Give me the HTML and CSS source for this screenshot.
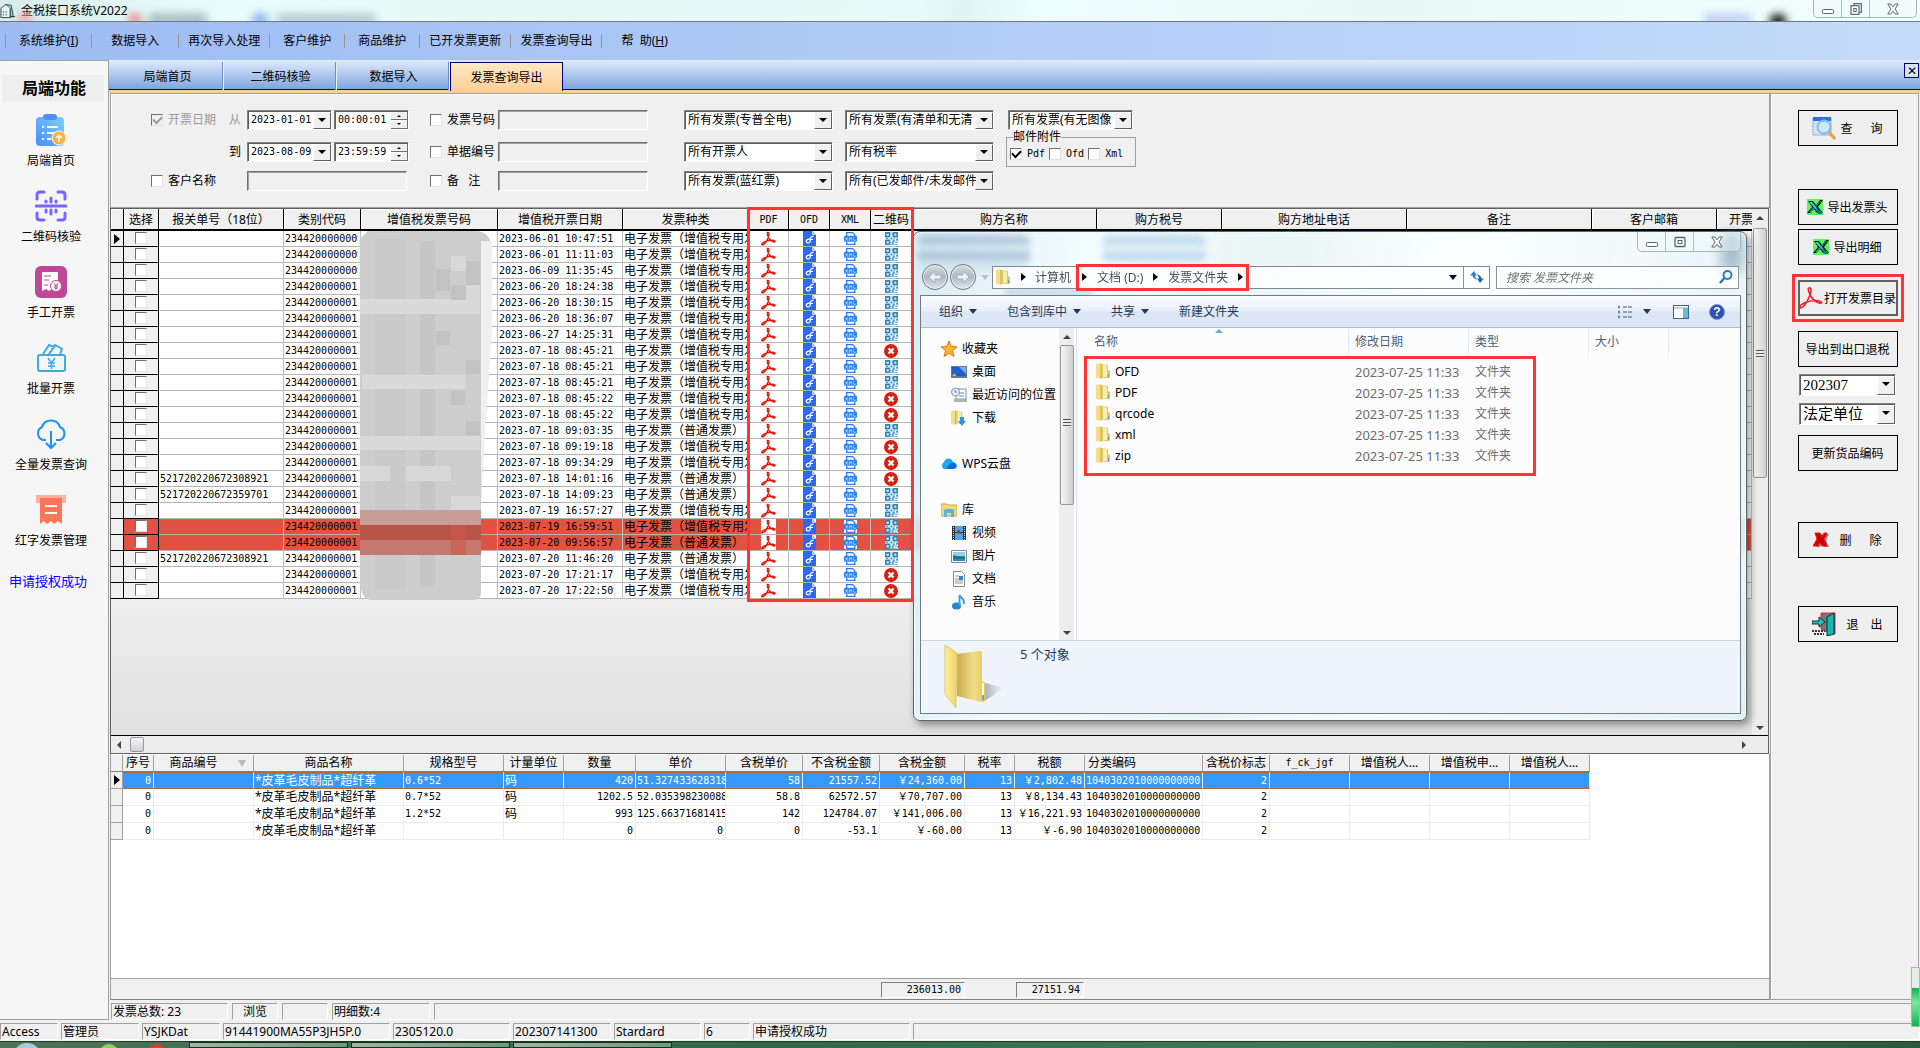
FILE: index.html
```html
<!DOCTYPE html>
<html lang="zh-CN">
<head>
<meta charset="utf-8">
<meta name="viewport" content="width=device-width, initial-scale=1">
<title>金税接口系统V2022</title>
<link rel="stylesheet" href="styles.css">
</head>
<body>
<svg class="defs" aria-hidden="true">
  <symbol id="i-pdf" viewBox="0 0 16 15"><path d="M7 1c2.200-.6 1.400 3 1 4.400-.9 3-3.500 8-6.200 8.800-2.100.3-.6-2.200 2.400-3.400C7 9.700 11 9 13.600 9.500c2.200.7 1.500 2.200-.3 1.600C10.500 10.200 7.500 6.500 7 4 6.700 2.800 6.300 1.400 7 1z" fill="none" stroke="#d91e0d" stroke-width="1.500"/></symbol>
  <symbol id="i-ofd" viewBox="0 0 13 15"><path d="M0 0h9l4 4v11H0z" fill="#2a69f5"/><path d="M9 0l4 4H9z" fill="#b9cffb"/><path d="M10.500 5.500C8 5 7.500 6 7.300 8v2.200c-.2 2.300-4 2.300-4.100.2 0-2 2.700-2.600 4.500-2.100h2.200" fill="none" stroke="#fff" stroke-width="1.200"/></symbol>
  <symbol id="i-xml" viewBox="0 0 12 12"><path d="M2.500 4V.6H8l2 2V4M2.500 9v2.400H10V9" fill="#fff" stroke="#2b7ff0" stroke-width="1.200"/><rect y="3.500" width="12" height="5.600" rx="1.200" fill="#2b7ff0"/><path d="M1.500 5l2 3m0-3l-2 3M5 8V5l1 1.500L7 5v3M9 5v2.700h1.800" fill="none" stroke="#cfe2ff" stroke-width=".7"/></symbol>
  <symbol id="i-qr" viewBox="0 0 12 12"><path d="M0 0h5v5H0zM7 0h5v5H7zM0 7h5v5H0z" fill="#2f86bd"/><path d="M1.500 1.500h2v2h-2zM8.500 1.500h2v2h-2zM1.500 8.500h2v2h-2z" fill="#d4ecf8"/><path d="M6 1h1v2H6zM5 5h2v2H5zM7 7h2v2H7zM9 9h3v1H9zM10 6h2v2h-2zM6 9h2v3H6zM9 11h2v1H9zM1 5.500h2v1H1zM8 5.500h1v1H8z" fill="#4a9fd0"/></symbol>
  <symbol id="i-bad" viewBox="0 0 14 14"><circle cx="7" cy="7" r="7" fill="#d8200f"/><path d="M4.500 4.500l5 5m0-5l-5 5" stroke="#fff" stroke-width="2.400"/></symbol>
  <symbol id="i-folder" viewBox="0 0 14 16"><path d="M5 1l7 1v5l2 1v7H6z" fill="#e3c75a"/><path d="M0 1l5-1 1 2v14l-6-1z" fill="#f2df8b"/><path d="M7 2l4 .5v11L7 15z" fill="#f8edb5"/><path d="M5 1v14" stroke="#c5a53a"/><path d="M12.500 11v3" stroke="#5a9ed8"/></symbol>
  <symbol id="i-excel" viewBox="0 0 16 16"><path d="M0 0h16v16H0z" fill="#5df35d"/><path d="M1 2h5l3 4 4-5h3l-5 7 5 6h-6l-3-4-4 4H0l5-6z" fill="#111"/><path d="M2 3h3l8 10h-2z" fill="#2ad8d8"/><path d="M13 2h1L4 13H2z" fill="#1aa6a6"/><path d="M9 9l6 4v2h-4z" fill="#087f80"/></symbol>
  <symbol id="i-min" viewBox="0 0 12 12"><rect x=".5" y="6.500" width="11" height="4" rx="1" fill="#fff" stroke="#5b6270"/></symbol>
  <symbol id="i-max" viewBox="0 0 12 12"><rect x="1" y="1.500" width="10" height="9" rx="1" fill="#fff" stroke="#5b6270" stroke-width="1.300"/><rect x="4" y="4.500" width="4" height="3" fill="none" stroke="#5b6270"/></symbol>
  <symbol id="i-restore" viewBox="0 0 12 12"><path d="M4 2.500V.7h7.300v8.600H9.500" fill="none" stroke="#5b6270" stroke-width="1.200"/><rect x="1" y="2.700" width="8" height="8.600" fill="#fff" stroke="#5b6270" stroke-width="1.200"/><rect x="3.800" y="5.500" width="2.400" height="3" fill="none" stroke="#5b6270"/></symbol>
  <symbol id="i-close" viewBox="0 0 12 12"><path d="M.8 1h3L6 3.800 8.200 1h3L8 6l3.200 5h-3L6 8.200 3.800 11h-3L4 6z" fill="#fff" stroke="#5b6270"/></symbol>
</svg>

<header class="titlebar">
  <svg class="app-icon" viewBox="0 0 16 16"><path d="M1 5l5-4 5 4v10H1z" fill="#e9f3f1" stroke="#24423f"/><path d="M6 1l6 1 2 11-3 2V5" fill="#8ed0c6" stroke="#24423f"/><path d="M3 9h1M6 9h1M3 12h1M6 12h1" stroke="#356" stroke-width="1.500"/><path d="M12 14h4" stroke="#111"/></svg>
  <h1>金税接口系统V2022</h1>
  <i class="glow pink"></i><i class="glow rose"></i><i class="glow slate"></i><i class="glow blue"></i><i class="glow steel"></i><i class="glow sky"></i><i class="glow dark"></i>
  <div class="win-buttons">
    <button aria-label="最小化"><svg><use href="#i-min"/></svg></button><button aria-label="还原"><svg><use href="#i-restore"/></svg></button><button class="close" aria-label="关闭"><svg><use href="#i-close"/></svg></button>
  </div>
</header>

<nav class="menubar">
  <a class="mid" href="#">系统维护(<u>I</u>)</a><a class="wide" href="#">数据导入</a><a href="#">再次导入处理</a><a class="mid" href="#">客户维护</a><a class="mid" href="#">商品维护</a><a href="#">已开发票更新</a><a href="#">发票查询导出</a><a class="wide" href="#">帮&nbsp;&nbsp;助(<u>H</u>)</a>
</nav>

<div class="body">
  <aside class="sidebar">
    <h2>局端功能</h2>
    <a href="#"><svg viewBox="0 0 32 32"><defs><linearGradient id="cb" x1="0" y1="1" x2="1" y2="0"><stop stop-color="#4a8cff"/><stop offset="1" stop-color="#7fd0ff"/></linearGradient></defs><rect x="1" y="3" width="28" height="29" rx="4" fill="url(#cb)"/><rect x="8" y="0" width="14" height="6" rx="3" fill="#4a90f8"/><path d="M7 13h2m3 0h11M7 19h2m3 0h7M7 25h2m3 0h4" stroke="#fff" stroke-width="2"/><circle cx="24" cy="24" r="7" fill="#fbb13c" stroke="#fff"/><path d="M24 28v-7m-3 3l3-3 3 3" stroke="#fff" stroke-width="1.500" fill="none"/></svg>局端首页</a>
    <a href="#"><svg viewBox="0 0 32 32" fill="none" stroke="#7a63ff" stroke-width="3" stroke-linecap="round"><path d="M2 9V5q0-3 3-3h4M23 2h4q3 0 3 3v4M2 23v4q0 3 3 3h4M23 30h4q3 0 3-3v-4M1 16h30M11 11v1M16 8v4M21 11v1M11 20v2M16 20v4M21 20v2"/></svg>二维码核验</a>
    <a href="#"><svg viewBox="0 0 32 32"><rect width="32" height="32" rx="6" fill="#bd4898"/><path d="M7 6h16v10l-3 9-3-2-3 2-3-2-4 2z" fill="#fff"/><path d="M9 10h7M9 14h5M9 19h4" stroke="#bd4898"/><circle cx="21" cy="20" r="5.500" fill="#fff" stroke="#bd4898"/><path d="M19 17l2 3 2-3M21 20v4M19 20h4M19 22h4" stroke="#bd4898" fill="none"/></svg>手工开票</a>
    <a href="#"><svg viewBox="0 0 32 32" fill="none" stroke="#3fa9e0" stroke-width="2"><rect x="3" y="13" width="27" height="16" rx="2"/><path d="M8 12l6-9 5 2-5 7M17 7l3-4 7 4-2 5"/><path d="M13 16l3.500 5 3.500-5M16.500 21v6M13 21h7M13 24h7" stroke-width="1.500"/></svg>批量开票</a>
    <a href="#"><svg viewBox="0 0 32 32" fill="none" stroke="#1a93f5" stroke-width="2"><path d="M11 22H8A7 7 0 0 1 7 9 9.500 9.500 0 0 1 25 9a7 7 0 0 1 0 13h-4M16 13v17m-5-5l5 5 5-5"/></svg>全量发票查询</a>
    <a href="#"><svg viewBox="0 0 32 32"><path d="M1 1h30v8H1z" fill="#ffb1a0"/><path d="M5 4h22v26l-4-3-4 3-3-3-4 3-3-3-4 3z" fill="#ff7558"/><path d="M10 12h12M10 19h12" stroke="#fff" stroke-width="2"/></svg>红字发票管理</a>
    <p>申请授权成功</p>
  </aside>

  <main class="main">
    <nav class="tabs">
      <a href="#">局端首页</a><a href="#">二维码核验</a><a href="#">数据导入</a><a class="active" href="#">发票查询导出</a>
      <button aria-label="关闭标签">✕</button>
    </nav>
    <div class="work">
      <div class="content">
        <form class="filter">
          <label class="tick off"><input type="checkbox" checked disabled>开票日期</label>
          <span class="off">从</span>
          <div class="when"><span class="combo num"><select aria-label="开始日期"><option>2023-01-01</option></select></span><span class="spin"><input aria-label="开始时间" value="00:00:01"><i></i></span></div>
          <label class="tick c4"><input type="checkbox">发票号码</label>
          <input class="field" aria-label="发票号码">
          <span class="combo c6"><select aria-label="发票类型"><option>所有发票(专普全电)</option></select></span>
          <span class="combo c7"><select aria-label="清单"><option>所有发票(有清单和无清</option></select></span>
          <div class="attach">
            <span class="combo"><select aria-label="图像"><option>所有发票(有无图像</option></select></span>
            <fieldset><legend>邮件附件</legend>
              <label class="tick num"><input type="checkbox" checked>Pdf</label><label class="tick num"><input type="checkbox">Ofd</label><label class="tick num"><input type="checkbox">Xml</label>
            </fieldset>
          </div>
          <span class="c2">到</span>
          <div class="when"><span class="combo num"><select aria-label="结束日期"><option>2023-08-09</option></select></span><span class="spin"><input aria-label="结束时间" value="23:59:59"><i></i></span></div>
          <label class="tick c4"><input type="checkbox">单据编号</label>
          <input class="field" aria-label="单据编号">
          <span class="combo c6"><select aria-label="开票人"><option>所有开票人</option></select></span>
          <span class="combo c7"><select aria-label="税率"><option>所有税率</option></select></span>
          <label class="tick c1"><input type="checkbox">客户名称</label>
          <input class="field c3" aria-label="客户名称">
          <label class="tick c4"><input type="checkbox">备&nbsp;&nbsp;&nbsp;注</label>
          <input class="field" aria-label="备注">
          <span class="combo c6"><select aria-label="蓝红票"><option>所有发票(蓝红票)</option></select></span>
          <span class="combo c7"><select aria-label="邮件状态"><option>所有(已发邮件/未发邮件)</option></select></span>
        </form>

        <section class="invoices">
          <div class="view">
            <div class="clip">
            <table class="grid1">
              <colgroup><col class="w13"><col class="w35"><col class="w125"><col class="w77"><col class="w137"><col class="w125"><col class="w126"><col class="w40"><col class="w41"><col class="w41"><col class="w41"><col class="w185"><col class="w125"><col class="w185"><col class="w185"><col class="w125"><col></colgroup>
              <thead><tr><th></th><th>选择</th><th>报关单号（18位）</th><th>类别代码</th><th>增值税发票号码</th><th>增值税开票日期</th><th>发票种类</th><th class="num">PDF</th><th class="num">OFD</th><th class="num">XML</th><th>二维码</th><th>购方名称</th><th>购方税号</th><th>购方地址电话</th><th>备注</th><th>客户邮箱</th><th class="last">开票</th></tr></thead>
              <tbody id="invoice-rows"></tbody>
            </table>
            </div>
            <div class="vscroll"><i class="up"></i><b></b><i class="down"></i></div>
          </div>
          <div class="hscroll"><i class="left"></i><b></b><i class="right"></i></div>

          <svg class="mosaic" viewBox="0 0 134 369" aria-hidden="true">
            <path d="M8 0h110q12 2 13 14v90l-7 110-3 55v92q0 8-8 8H12q-8 0-10-8-4-8-2-20V8z" fill="#cdcdcd"/>
            <path d="M121 10h11v90l-7 100-4 60z" fill="#f0f0f0"/>
            <path d="M15 8h30v350H15z" fill="#c9c9c9"/><path d="M60 10h15v345H60z" fill="#c6c6c6"/>
            <path d="M0 68h120v15H0zM2 144h103v14H2zM0 205h120v14H0z" fill="#dadada"/>
            <path d="M76 38h14v22H76zM91 54h15v15H91zM106 30h14v24h-14zM76 100h14v14H76zM106 129h14v14h-14zM91 160h14v14H91zM106 190h14v14h-14z" fill="#c2c2c2"/>
            <path d="M91 25h15v15H91zM106 54h14v14h-14zM0 235h30v15H0zM46 235h45v15H46zM91 265h29v14H91z" fill="#d8d8d8"/>
            <path d="M0 279h121v15H0z" fill="#c99d98"/><path d="M0 294h121v15H0z" fill="#b9544a"/><path d="M0 309h121v15H0z" fill="#c57870"/><path d="M91 294h15v30H91z" fill="#d0584a" opacity=".6"/>
          </svg>

          <div class="explorer">
            <i class="smudge s1"></i><i class="smudge s2"></i><i class="smudge s3"></i><i class="smudge s4"></i>
            <div class="ex-title"><div class="win-buttons">
              <button aria-label="最小化"><svg><use href="#i-min"/></svg></button><button aria-label="最大化"><svg><use href="#i-max"/></svg></button><button class="close" aria-label="关闭"><svg><use href="#i-close"/></svg></button></div></div>
            <div class="ex-nav">
              <button class="round" aria-label="后退"><svg viewBox="0 0 16 16"><path d="M8 2L2 8l6 6v-4h6V6H8z" fill="#eef2f5" stroke="#a9b0b6"/></svg></button><button class="round" aria-label="前进"><svg viewBox="0 0 16 16"><path d="M8 2l6 6-6 6v-4H2V6h6z" fill="#eef2f5" stroke="#a9b0b6"/></svg></button>
              <i class="drop pale"></i>
              <div class="address">
                <svg class="fold"><use href="#i-folder"/></svg><i class="play"></i><a href="#">计算机</a>
                <div class="path"><i class="play"></i><a href="#">文档 (D:)</a><i class="play"></i><a href="#">发票文件夹</a><i class="play"></i></div>
                <i class="drop"></i>
                <button aria-label="刷新"><svg viewBox="0 0 16 14"><path d="M5 1L1 5.500h2.500Q4 9 8 9.500 6 7 6 5.500h2z" fill="#2f7fc4"/><path d="M11 13l4-4.500h-2.500Q12 5 8 4.500q2 2.500 2 4H8z" fill="#1f68ab"/></svg></button>
              </div>
              <div class="search"><input aria-label="搜索" placeholder="搜索 发票文件夹"><svg viewBox="0 0 14 14" fill="none" stroke="#2a7cc0"><circle cx="8.500" cy="5" r="4" stroke-width="2"/><path d="M5.500 8L1 13" stroke-width="2.500"/></svg></div>
            </div>
            <div class="ex-frame">
              <div class="ex-tools">
                <a href="#">组织<i class="drop"></i></a><a href="#">包含到库中<i class="drop"></i></a><a href="#">共享<i class="drop"></i></a><a href="#">新建文件夹</a>
                <div class="tool-icons">
                  <svg class="i16" viewBox="0 0 16 14"><path d="M1 2h2M1 7h2M1 12h2" stroke="#5a87b8" stroke-width="2.500"/><path d="M6 2h4m1 0h4M6 7h4m1 0h4M6 12h4m1 0h4" stroke="#4b5a6c"/></svg><i class="drop"></i>
                  <svg class="i16 pane" viewBox="0 0 16 14"><rect x=".5" y=".5" width="15" height="13" fill="#fff" stroke="#4a6078"/><path d="M1 3h14" stroke="#8aa"/><path d="M10 3h5v10h-5z" fill="#62bce0"/></svg>
                  <svg class="i16" viewBox="0 0 16 16"><circle cx="8" cy="8" r="7.500" fill="#2b50b8" stroke="#8a94a8"/><text x="8" y="12" font-size="12" font-weight="700" text-anchor="middle" fill="#fff" font-family="Liberation Sans, sans-serif">?</text></svg>
                </div>
              </div>
              <div class="ex-body">
                <ul class="tree">
                  <li class="root"><svg viewBox="0 0 16 16"><path d="M8 0l2.200 5.500 5.800.4-4.500 3.700L13 15.500 8 12.300 3 15.500l1.500-5.900L0 5.900l5.800-.4z" fill="#ffb52e" stroke="#d9771d"/></svg>收藏夹</li>
                  <li><svg viewBox="0 0 16 16"><rect y="2" width="16" height="12" fill="#5d7a94"/><path d="M1 3h14v9H1z" fill="#1f5fc8"/><path d="M8 3h7v7z" fill="#78aef0"/><path d="M1 12l3-3 1 3z" fill="#fa5"/></svg>桌面</li>
                  <li><svg viewBox="0 0 16 16"><path d="M5 2h10v10H5z" fill="#fff" stroke="#889"/><circle cx="4.500" cy="5" r="4" fill="#e5e9ee" stroke="#8a97a3"/><path d="M4 3v2h2M8 6h5M8 9h5" stroke="#4790c0" fill="none"/><path d="M3 12h13v3H3z" fill="#aab3ba"/></svg>最近访问的位置</li>
                  <li><svg viewBox="0 0 16 16"><use href="#i-folder" width="13" height="15"/><path d="M9 7h4v4h2l-4 5-4-5h2z" fill="#2e96e0"/></svg>下载</li>
                  <li></li>
                  <li class="root"><svg viewBox="0 0 16 16"><path d="M3 13a4 4 0 0 1 0-7c2-5 8-4 9 0 5 1 5 7 0 7z" fill="#1fa8ee"/><path d="M6 13c1-5 5-7 7-6 4 1 3 6-1 6z" fill="#1466dc"/></svg>WPS云盘</li>
                  <li></li>
                  <li class="root"><svg viewBox="0 0 16 16"><path d="M0 2h6l1 1h9v11H0z" fill="#f1da7a" stroke="#caa944"/><path d="M3 15V9q0-2 2-2h6q2 0 2 2v6h-3v-4H6v4z" fill="#56b4e4"/></svg>库</li>
                  <li><svg viewBox="0 0 16 16"><path d="M1 1h14v14H1z" fill="#333"/><path d="M4 1h8v6H4zM4 8h8v7H4z" fill="#4da6e8"/><path d="M7 4l4 5-5-1z" fill="#8c3b20"/><path d="M2.500 2v13M13.500 2v13" stroke="#ddd" stroke-dasharray="1 1"/></svg>视频</li>
                  <li><svg viewBox="0 0 16 16"><path d="M.5 2.500h15v12H.5z" fill="#fff" stroke="#888"/><path d="M2 4h12v5H2z" fill="#8fd0f5"/><path d="M2 7q5 2 12 1v5H2z" fill="#1f7c70"/><path d="M2 11h12v2H2z" fill="#2f8ad0"/></svg>图片</li>
                  <li><svg viewBox="0 0 16 16"><path d="M2.500.5h8l3 3v12h-11z" fill="#fff" stroke="#888"/><path d="M4 5h4M4 8h8M4 10h8M4 12h8" stroke="#89a"/><path d="M8 5h4v4H8z" fill="#3a7fb8"/></svg>文档</li>
                  <li><svg viewBox="0 0 16 16"><ellipse cx="5.500" cy="12" rx="4.500" ry="3.500" fill="#1f86d2"/><path d="M8.500 12V1c1 3 6 4 4 9" fill="none" stroke="#3aa0e0" stroke-width="2"/></svg>音乐</li>
                </ul>
                <div class="vscroll"><i class="up"></i><b></b><i class="down"></i></div>
                <div class="files-area">
                  <table class="files">
                    <colgroup><col class="f1"><col class="f2"><col class="f2"><col class="f4"><col></colgroup>
                    <thead><tr><th>名称</th><th>修改日期</th><th>类型</th><th>大小</th><th></th></tr></thead>
                    <tbody>
                      <tr><td><svg class="fold"><use href="#i-folder"/></svg>OFD</td><td class="date">2023-07-25 11:33</td><td>文件夹</td><td></td><td></td></tr>
                      <tr><td><svg class="fold"><use href="#i-folder"/></svg>PDF</td><td class="date">2023-07-25 11:33</td><td>文件夹</td><td></td><td></td></tr>
                      <tr><td><svg class="fold"><use href="#i-folder"/></svg>qrcode</td><td class="date">2023-07-25 11:33</td><td>文件夹</td><td></td><td></td></tr>
                      <tr><td><svg class="fold"><use href="#i-folder"/></svg>xml</td><td class="date">2023-07-25 11:33</td><td>文件夹</td><td></td><td></td></tr>
                      <tr><td><svg class="fold"><use href="#i-folder"/></svg>zip</td><td class="date">2023-07-25 11:33</td><td>文件夹</td><td></td><td></td></tr>
                    </tbody>
                  </table>
                  <i class="mark files-mark"></i>
                </div>
              </div>
              <div class="ex-info">
                <svg viewBox="0 0 60 66"><defs><linearGradient id="fa"><stop stop-color="#fdf09c"/><stop offset="1" stop-color="#eed467"/></linearGradient><linearGradient id="fb"><stop stop-color="#c9a94a"/><stop offset=".6" stop-color="#f0dc88"/><stop offset="1" stop-color="#e9c94c"/></linearGradient><linearGradient id="fc"><stop stop-color="#a2a8b2"/><stop offset="1" stop-color="#a2a8b2" stop-opacity="0"/></linearGradient></defs><path d="M38 38l21 6-9 7-11 7z" fill="url(#fc)"/><path d="M12 10L36 7q2 0 2 2v28l3 2v18l-4 1-24-6z" fill="url(#fb)"/><path d="M1 1l12 8v31l-1 2v22L1 50z" fill="url(#fa)" stroke="#dfc66e"/><path d="M38 39h2v13h-2z" fill="#fff"/><path d="M38 51h2v5h-2z" fill="#59a3e6"/></svg>
                <span>5 个对象</span>
              </div>
            </div>
          </div>
          <i class="mark columns-mark"></i>
        </section>

        <section class="details">
          <table class="grid2">
            <colgroup><col class="w12"><col class="w31"><col class="w100"><col class="w150"><col class="w100"><col class="w60"><col class="w72"><col class="w90"><col class="w77"><col class="w77"><col class="w85"><col class="w50"><col class="w70"><col class="w118"><col class="w67"><col class="w80"><col class="w80"><col class="w80"><col class="w80"></colgroup>
            <thead><tr><th></th><th>序号</th><th>商品编号<i class="sort"></i></th><th>商品名称</th><th>规格型号</th><th>计量单位</th><th>数量</th><th>单价</th><th>含税单价</th><th>不含税金额</th><th>含税金额</th><th>税率</th><th>税额</th><th class="start">分类编码</th><th>含税价标志</th><th class="num">f_ck_jgf</th><th>增值税人...</th><th>增值税申...</th><th>增值税人...</th></tr></thead>
            <tbody id="item-rows"></tbody>
          </table>
          <div class="totals"><output>236013.00</output><output class="second">27151.94</output></div>
        </section>
      </div>

      <aside class="actions">
        <button><svg class="b24" viewBox="0 0 24 24"><path d="M1 2h18v17H1z" fill="#cfe4fb" stroke="#8bb6ea"/><path d="M1 1h18v4H1z" fill="#2a6ff0"/><circle cx="12" cy="11" r="6.500" fill="#c2edfb" stroke="#8fb7d4" stroke-width="2"/><path d="M17 16l6 7" stroke="#e9a13a" stroke-width="3"/></svg>查<span class="wide-gap"></span>询</button>
        <button class="m43"><svg class="i16"><use href="#i-excel"/></svg>导出发票头</button>
        <button class="m4"><svg class="i16"><use href="#i-excel"/></svg>导出明细</button>
        <button class="m15 focus"><svg class="b24" viewBox="0 0 24 24" fill="none" stroke="#e8202a" stroke-width="1.600"><path d="M10 2c3-1 2 4 1 7-2 5-6 12-9 13-3 0-1-3 3-5 5-2 11-3 15-2 4 1 3 3 0 2-5-1-9-7-10-11-1-2-1-4 0-4z"/></svg>打开发票目录</button>
        <button class="m15">导出到出口退税</button>
        <span class="combo big m7"><select aria-label="月份"><option>202307</option></select></span>
        <span class="combo big m7"><select aria-label="单位"><option>法定单位</option></select></span>
        <button class="m10">更新货品编码</button>
        <button class="m51"><svg class="i16" viewBox="0 0 16 16"><path d="M4 2h5l2 3 2-3h3l-3 6 3 7h-5l-2-3-2 3H3l4-7z" fill="#888"/><path d="M2 1h5l2 4 2-4h3l-3 6 3 7H9L7 11l-2 3H0l4-7z" fill="#c00" stroke="#f11"/></svg><span class="pad"></span>删<span class="wide-gap"></span>除</button>
        <button class="m48"><svg class="b24" viewBox="0 0 24 24"><path d="M9 1h14v21h-3L9 17z" fill="#777" stroke="#e22"/><path d="M15 5l7-4v21l-7 2z" fill="#13b6b6" stroke="#033"/><path d="M0 9h7V5l6 5-6 5v-3H0z" fill="#1cc" stroke="#222"/><path d="M0 19h13M2 22h10" stroke="#333" stroke-width="2" stroke-dasharray="2 1"/></svg><span class="pad"></span>退<span class="gap"></span>出</button>
      </aside>
    </div>
    <footer class="status first"><span class="s117">发票总数: 23</span><span class="s46 center">浏览</span><span class="s46"></span><span class="s98">明细数:4</span><span class="rest"></span></footer>
    <i class="meter"></i>
  </main>
</div>

<footer class="status"><span class="s58">Access</span><span class="s78">管理员</span><span class="s78">YSJKDat</span><span class="s167">91441900MA55P3JH5P.0</span><span class="s117">2305120.0</span><span class="s98">202307141300</span><span class="s87">Stardard</span><span class="s46">6</span><span class="s158">申请授权成功</span><span class="rest"></span></footer>
<div class="taskbar"><i class="orb"></i><i class="dot green"></i><i class="dot red"></i><b></b><b></b><b></b></div>
<script src="script.js"></script>
</body>
</html>
```

FILE: script.js
```js
// Invoice list: declaration number, category code, date, kind (0 special, 1 ordinary), QR available, credit note
const invoices = [
  ['', '234420000000', '2023-06-01 10:47:51', 0, 1],
  ['', '234420000000', '2023-06-01 11:11:03', 0, 1],
  ['', '234420000000', '2023-06-09 11:35:45', 0, 1],
  ['', '234420000001', '2023-06-20 18:24:38', 0, 1],
  ['', '234420000001', '2023-06-20 18:30:15', 0, 1],
  ['', '234420000001', '2023-06-20 18:36:07', 0, 1],
  ['', '234420000001', '2023-06-27 14:25:31', 0, 1],
  ['', '234420000001', '2023-07-18 08:45:21', 0, 0],
  ['', '234420000001', '2023-07-18 08:45:21', 0, 1],
  ['', '234420000001', '2023-07-18 08:45:21', 0, 1],
  ['', '234420000001', '2023-07-18 08:45:22', 0, 0],
  ['', '234420000001', '2023-07-18 08:45:22', 0, 0],
  ['', '234420000001', '2023-07-18 09:03:35', 1, 1],
  ['', '234420000001', '2023-07-18 09:19:18', 0, 0],
  ['', '234420000001', '2023-07-18 09:34:29', 0, 0],
  ['521720220672308921', '234420000001', '2023-07-18 14:01:16', 1, 0],
  ['521720220672359701', '234420000001', '2023-07-18 14:09:23', 1, 1],
  ['', '234420000001', '2023-07-19 16:57:27', 0, 1],
  ['', '234420000001', '2023-07-19 16:59:51', 0, 1, 1],
  ['', '234420000001', '2023-07-20 09:56:57', 1, 1, 1],
  ['521720220672308921', '234420000001', '2023-07-20 11:46:20', 1, 1],
  ['', '234420000001', '2023-07-20 17:21:17', 0, 0],
  ['', '234420000001', '2023-07-20 17:22:50', 0, 0]
];
const kinds = ['电子发票（增值税专用发票）', '电子发票（普通发票）'];
const icon = (id) => `<td class="ic"><svg class="${id}"><use href="#i-${id}"/></svg></td>`;
document.getElementById('invoice-rows').innerHTML = invoices.map((r, i) =>
  `<tr class="${r[5] ? 'red' : ''}"><td class="head">${i ? '' : '<i class="cursor"></i>'}</td>` +
  `<td class="pick"><input type="checkbox" aria-label="选择第${i + 1}行"></td>` +
  `<td class="num">${r[0]}</td><td class="num">${r[1]}</td><td></td><td class="num">${r[2]}</td><td>${kinds[r[3]]}</td>` +
  icon('pdf') + icon('ofd') + icon('xml') + icon(r[4] ? 'qr' : 'bad') +
  '<td></td>'.repeat(6) + '</tr>').join('');

const items = [
  ['0.6*52', '码', '420', '51.3274336283186', '58', '21557.52', '￥24,360.00', '13', '￥2,802.48'],
  ['0.7*52', '码', '1202.5', '52.0353982300885', '58.8', '62572.57', '￥70,707.00', '13', '￥8,134.43'],
  ['1.2*52', '码', '993', '125.663716814159', '142', '124784.07', '￥141,006.00', '13', '￥16,221.93'],
  ['', '', '0', '0', '0', '-53.1', '￥-60.00', '13', '￥-6.90']
];
document.getElementById('item-rows').innerHTML = items.map((r, i) =>
  `<tr class="${i ? '' : 'current'}"><td class="head">${i ? '' : '<i class="cursor"></i>'}</td><td class="num end">0</td><td></td>` +
  `<td>*皮革毛皮制品*超纤革</td><td class="num">${r[0]}</td><td>${r[1]}</td><td class="num end">${r[2]}</td>` +
  `<td class="num ${r[3].length > 2 ? '' : 'end'}">${r[3]}</td>` +
  r.slice(4).map((v) => `<td class="num end">${v}</td>`).join('') +
  '<td class="num">1040302010000000000</td><td class="num end">2</td>' + '<td></td>'.repeat(4) + '</tr>').join('');
```

FILE: styles.css
```css
* { box-sizing: border-box; }
html, body { margin: 0; }
body {
  display: flex; flex-direction: column; min-height: 100vh; overflow: hidden;
  font: 12px/15px "Noto Sans", "Noto Sans CJK SC", sans-serif; color: #000; background: #f0f0f0;
}
a { color: inherit; text-decoration: none; }
button, input, select { font: inherit; color: inherit; margin: 0; padding: 0; border-radius: 0; }
h1, h2, p, ul { margin: 0; padding: 0; font: inherit; list-style: none; }
svg { display: block; flex: none; }
.defs { display: none; }
.num { font-family: "DejaVu Sans Mono", "Noto Sans CJK SC", monospace; font-size: 10px; }
.i16 { width: 16px; height: 16px; }
.b24 { width: 24px; height: 24px; }

/* title bar */
.titlebar { position: relative; display: flex; align-items: flex-start; gap: 6px; height: 22px; overflow: hidden; border-bottom: 1px solid #70787c; background: linear-gradient(100deg, #d9ecec 0, #e9fdfc 12%, #e4f8f6 30%, #eafafa 48%, #e2f2f2 50%, #effefe 54%, #eaf9f8 72%, #f2fffe 100%); }
.titlebar h1 { line-height: 21px; }
.app-icon { width: 15px; height: 16px; margin-top: 3px; }
.glow { position: absolute; top: 14px; width: 60px; height: 10px; border-radius: 5px; filter: blur(4px); }
.pink { left: 18px; width: 14px; background: #f2a0a0; }
.rose { left: 128px; width: 14px; background: #f08080; }
.slate { left: 148px; background: #9fb4c4; }
.blue { left: 252px; width: 16px; background: #7ba4f4; }
.steel { left: 276px; width: 100px; background: #b0c4d2; }
.sky { left: 1704px; width: 48px; background: #bccdf5; }
.dark { left: 1770px; width: 16px; height: 16px; background: #1e2418; }
.win-buttons { display: flex; margin-left: auto; border: 1px solid #a5b4b6; border-top: 0; border-radius: 0 0 5px 5px; overflow: hidden; }
.win-buttons button { display: grid; place-items: center; width: 28px; height: 17px; border: 0; border-right: 1px solid #b0bec0; background: #f0fbfb66; }
.win-buttons .close { width: 46px; border: 0; }
.win-buttons svg { width: 12px; height: 12px; }
.titlebar .win-buttons { margin-right: 3px; }

/* menu */
.menubar { display: flex; align-items: center; height: 38px; padding-left: 5px; background: linear-gradient(90deg, #9dbcf3, #c4dbf9); }
.menubar a { padding: 0 9px; border-left: 1px solid #9a9396; line-height: 14px; }
.menubar .mid { padding: 0 13px; }
.menubar .wide { padding: 0 19px; }

.body { display: flex; flex: 1; }
.sidebar { display: flex; flex-direction: column; width: 109px; margin-bottom: 1px; padding: 14px 8px 0 2px; border: 1px solid #a0a0a0; border-width: 1px 1px 1px 0; background: #f6f6f6; }
.sidebar h2 { height: 27px; margin: 0 -4px 12px 0; padding-left: 2px; background: #eee; font-size: 16px; font-weight: 700; line-height: 26px; text-align: center; }
.sidebar a { display: flex; flex-direction: column; align-items: center; gap: 7px; height: 76px; }
.sidebar svg { width: 32px; height: 32px; }
.sidebar p { margin-top: 4px; padding-left: 7px; font-size: 13px; color: #00f; }

.main { position: relative; display: flex; flex: 1; flex-direction: column; min-width: 0; }
.tabs { display: flex; height: 33px; padding: 2px 0 0 2px; border-bottom: 3px solid #ffcf95; background: linear-gradient(#dfebfd, #7ba3de); box-shadow: inset 0 -1px #000080; }
.tabs a { width: 113px; line-height: 29px; text-align: center; box-shadow: inset -1px 0 #eaf2ff, inset -2px 0 #6c8dc4; }
.tabs .active { margin-bottom: -1px; border: 1px solid #000080; border-bottom: 0; background: linear-gradient(#ffe9c4, #ffcf95); box-shadow: none; }
.tabs button { width: 15px; height: 15px; margin: 1px 1px 0 auto; border: 1px solid #000080; background: #d5e4fb; font-size: 12px; line-height: 12px; }
.work { display: flex; flex: 1; }
.content { display: flex; flex: 1; flex-direction: column; min-width: 0; padding-left: 1px; }

/* filter */
.filter { display: grid; grid-template-columns: 78px 18px 183px 68px 186px 161px 161px 130px; grid-template-rows: 32px 29px 20px; align-items: start; height: 115px; padding: 16px 0 0 40px; border: 1px solid #a0a0a0; box-shadow: inset 1px 1px #fff; line-height: 20px; }
.off { color: #9a9a9a; }
.c1 { grid-column: 1; } .c2 { grid-column: 2; } .c3 { grid-column: 3; } .c4 { grid-column: 4; } .c6 { grid-column: 6; } .c7 { grid-column: 7; }
.tick { display: flex; align-items: center; gap: 5px; white-space: nowrap; }
input[type="checkbox"] { appearance: none; flex: none; display: grid; place-items: center; width: 12px; height: 12px; border: 1px solid; border-color: #707070 #e3e3e3 #e3e3e3 #707070; background: #fff; }
input[type="checkbox"]:checked::after { content: ""; width: 7px; height: 4px; margin-bottom: 2px; border: solid #000; border-width: 0 0 2px 2px; transform: rotate(-45deg); }
input[type="checkbox"]:disabled { background: #f0f0f0; }
input[type="checkbox"]:disabled::after { border-color: #999; }
.when { display: flex; gap: 2px; }
.when .combo { width: 85px; }
.combo, .spin { position: relative; display: flex; width: 149px; height: 20px; border: 1px solid; border-color: #808080 #fff #fff #808080; background: #fff; box-shadow: inset 1px 1px #5c5c5c; overflow: hidden; }
.combo select { appearance: none; flex: 1; min-width: 0; padding: 0 16px 0 3px; border: 0; background: none; line-height: 18px; clip-path: inset(0 17px 0 0); }
.combo::before { content: ""; position: absolute; top: 1px; right: 0; bottom: 0; width: 16px; border: 1px solid; border-color: #fff #606060 #606060 #fff; background: #f0f0f0; }
.combo::after { content: ""; position: absolute; top: 7px; right: 5px; border: 4px solid transparent; border-top-color: #000; border-bottom: 0; pointer-events: none; }
.spin { width: 75px; }
.spin input { width: 54px; padding-left: 3px; border: 0; background: none; font: 10px/18px "DejaVu Sans Mono", monospace; }
.spin i { display: flex; flex-direction: column; justify-content: space-between; align-items: center; width: 17px; margin: 1px 0 0 auto; padding: 3px 0; background: linear-gradient(#f0f0f0 7px, #707070 7px, #707070 8px, #fff 8px, #fff 9px, #f0f0f0 9px); border-right: 1px solid #707070; border-bottom: 1px solid #707070; }
.spin i::before, .spin i::after { content: ""; border: 2px solid transparent; border-bottom-color: #000; border-top: 0; }
.spin i::after { border: 2px solid transparent; border-top-color: #000; border-bottom: 0; }
.field { width: 150px; height: 20px; border: 1px solid; border-color: #707070 #fff #fff #707070; background: #f0f0f0; box-shadow: inset 1px 1px #a0a0a0; }
.field.c3 { width: 160px; }
.attach { grid-row: 1 / 4; grid-column: 8; }
.attach .combo { width: 125px; margin-left: 2px; }
fieldset { display: flex; gap: 4px; height: 36px; min-width: 0; margin: 1px 0 0; padding: 0 3px; border: 1px solid #a0a0a0; }
legend { margin-left: 3px; padding: 0; line-height: 12px; }
fieldset .tick { height: 22px; }

/* invoice list */
.invoices { position: relative; display: flex; flex: 1 1 546px; flex-direction: column; margin-right: 1px; border: 1px solid #606060; background: #ececec; }
.view { display: flex; flex: 1; min-height: 0; border-bottom: 1px solid #000; background: linear-gradient(#f0f0f0 70%, #e1e1e1); }
.clip { flex: 1; min-width: 0; overflow: hidden; }
table { border-collapse: separate; border-spacing: 0; table-layout: fixed; }
th { font-weight: 400; white-space: nowrap; overflow: hidden; }
td { white-space: nowrap; overflow: hidden; }
.grid1 { width: 100%; }
.grid1 th { height: 22px; padding: 0; border-right: 1px solid #000; border-bottom: 2px solid #000; background: #f0f0f0; box-shadow: inset 1px 1px #fff; line-height: 19px; }
.grid1 .last { padding-left: 12px; border-right: 0; text-align: left; }
.grid1 td { height: 16px; padding: 0 1px; border-right: 1px solid #c0c0c0; border-bottom: 1px solid #b4b4b4; background: #fff; line-height: 15px; }
.grid1 .head, .grid1 .pick { padding: 0; border-color: #000; background: #f0f0f0; }
.grid1 .pick input { margin: 1px auto 2px; }
.grid1 .red td { background: #e25243; }
.grid1 .red .head { background: #f0f0f0; }
.grid1 .ic { padding: 0; }
.ic svg { width: 15px; height: 15px; margin: 0 auto; background: #fff; }
.ic .ofd { width: 13px; }
.ic .xml, .ic .qr { width: 13px; height: 13px; }
.ic .bad { width: 14px; height: 14px; }
.cursor { display: block; width: 0; margin-left: 3px; border: 5px solid transparent; border-left: 6px solid #000; border-right: 0; }
.vscroll { display: flex; flex: none; flex-direction: column; align-items: center; width: 16px; background: #ededed; }
.vscroll b { width: 14px; height: 250px; margin-top: 8px; border: 1px solid #979797; border-radius: 2px; background: linear-gradient(90deg, #f7f7f7, #cfcfd2); }
.vscroll b::before { content: ""; display: block; width: 8px; height: 8px; margin: 121px auto; background: repeating-linear-gradient(#555 0 1px, #eee 1px 3px); }
.up, .down { margin-top: 7px; border: 4px solid transparent; border-bottom-color: #444; border-top: 0; }
.down { margin: auto 0 5px; border: 4px solid transparent; border-top-color: #444; border-bottom: 0; }
.hscroll { display: flex; flex: none; align-items: center; height: 17px; padding: 0 38px 0 6px; background: #ededed; }
.hscroll b { width: 14px; height: 15px; margin-left: 9px; border: 1px solid #979797; border-radius: 2px; background: linear-gradient(#f7f7f7, #cfcfd2); }
.left { border: 4px solid transparent; border-right-color: #444; border-left: 0; }
.right { margin: 0 -16px 0 auto; border: 4px solid transparent; border-left-color: #444; border-right: 0; }
.mosaic { position: absolute; left: 249px; top: 22px; width: 134px; height: 369px; }
.mark { position: absolute; border: 3px solid #ff3535; pointer-events: none; }
.columns-mark { left: 636px; top: -2px; width: 167px; height: 395px; }

/* column widths */
.w12 { width: 12px; } .w13 { width: 13px; } .w31 { width: 31px; } .w35 { width: 35px; } .w40 { width: 40px; } .w41 { width: 41px; } .w50 { width: 50px; } .w60 { width: 60px; } .w67 { width: 67px; } .w70 { width: 70px; } .w72 { width: 72px; } .w77 { width: 77px; } .w80 { width: 80px; } .w85 { width: 85px; } .w90 { width: 90px; } .w100 { width: 100px; } .w118 { width: 118px; } .w125 { width: 125px; } .w126 { width: 126px; } .w137 { width: 137px; } .w150 { width: 150px; } .w185 { width: 185px; }

/* file window */
.explorer { position: absolute; left: 802px; right: 21px; top: 22px; display: flex; flex-direction: column; height: 490px; padding: 0 5px 6px 6px; border: 1px solid #5b6468; border-radius: 7px; background: linear-gradient(100deg, #d4e8f3d9 0, #f4fdfef0 20%, #e9f5f6ea 40%, #fbfffff0 60%, #e3f1f4ea 100%); backdrop-filter: blur(4px); box-shadow: inset 0 0 0 1px #eaffff, 3px 4px 8px #0006; }
.smudge { position: absolute; height: 40px; border-radius: 8px; filter: blur(3px); opacity: .6; }
.s1 { left: 4px; top: 3px; width: 112px; height: 34px; background: repeating-linear-gradient(#8fb0ca 0 10px, #d6ebf5 10px 16px); }
.s2 { left: 188px; top: 3px; width: 104px; height: 28px; background: repeating-linear-gradient(#a5c8e4 0 10px, #e2f3fa 10px 16px); }
.s3 { right: 2px; top: 0; width: 24px; background: #7f9fb8; filter: blur(6px); }
.s4 { left: 90px; top: 56px; width: 90px; height: 8px; background: #a9c4d8; }
.ex-title { position: relative; display: flex; height: 33px; }
.ex-title .win-buttons { height: 20px; }
.ex-title .win-buttons button { height: 19px; }
.ex-nav { position: relative; display: flex; align-items: center; height: 24px; margin-bottom: 6px; padding: 0 2px; }
.round { display: grid; place-items: center; width: 26px; height: 26px; margin-right: 2px; padding: 0; border: 1px solid #68757e; border-radius: 13px; background: linear-gradient(#d5dbe0, #aeb9c2 50%, #dde8ee); box-shadow: inset 0 0 0 1px #f4f7f9; }
.round svg { width: 16px; height: 16px; }
.drop { display: inline-block; border: 4px solid transparent; border-top: 5px solid #1e395b; border-bottom: 0; }
.pale { margin: 0 3px; border-top-color: #b5c2cc; }
.address { display: flex; align-items: center; flex: 1; height: 23px; padding-left: 3px; border: 1px solid #7d8890; background: #fffc; color: #4a5058; }
.fold { display: inline-block; width: 14px; height: 16px; margin-right: 5px; vertical-align: top; }
.address .fold { margin-right: 11px; }
.play { border: 4px solid transparent; border-left: 5px solid #000; border-right: 0; }
.address > a { margin-left: 9px; }
.path { display: flex; align-items: center; gap: 10px; height: 27px; margin: 0 auto 0 5px; padding: 0 3px; border: 3px solid #ff3535; }
.address .drop { border-top-color: #003; }
.address button { display: grid; place-items: center; width: 26px; height: 21px; margin-left: 6px; border: 0; border-left: 1px solid #8a949b; background: none; }
.address button svg { width: 16px; height: 14px; }
.search { display: flex; align-items: center; width: 243px; height: 23px; margin-left: 6px; padding: 0 5px 0 9px; border: 1px solid #8a949b; background: #fffc; }
.search input { flex: 1; min-width: 0; border: 0; background: none; font-style: italic; }
.search input::placeholder { color: #707070; opacity: 1; }
.search svg { width: 14px; height: 14px; }
.ex-frame { position: relative; display: flex; flex: 1; flex-direction: column; min-height: 0; border: 1px solid #707c82; background: #fcfcfc; }
.ex-tools { display: flex; align-items: center; gap: 30px; height: 32px; padding: 0 15px 0 18px; border-bottom: 1px solid #a9b9cf; background: linear-gradient(#fafcfe, #e8eff9 48%, #dbe5f4 52%, #dce7f5); color: #1e395b; }
.ex-tools a { display: flex; align-items: center; gap: 6px; }
.tool-icons { display: flex; align-items: center; gap: 10px; margin-left: auto; }
.tool-icons .pane { margin: 0 10px 0 12px; }
.ex-body { display: flex; flex: 1; min-height: 0; }
.tree { width: 138px; padding: 9px 0 0 30px; overflow: hidden; }
.tree li { display: flex; align-items: center; gap: 5px; height: 23px; white-space: nowrap; }
.tree .root { margin-left: -10px; }
.tree svg { width: 16px; height: 16px; }
.ex-body .vscroll b { height: 160px; margin-top: 6px; }
.ex-body .vscroll b::before { margin: 73px auto; }
.ex-body .vscroll { border-right: 1px solid #fff; }
.files-area { position: relative; flex: 1; margin-left: 1px; border-left: 1px solid #d6e3f2; }
.files { width: 100%; }
.f1 { width: 272px; } .f2 { width: 120px; } .f4 { width: 80px; }
.files th { height: 33px; padding: 1px 0 8px 6px; border-right: 1px solid; border-image: linear-gradient(#dce8f5, #dce8f5 60%, #fcfcfc) 1; color: #4c607a; text-align: left; }
.files th:last-child { border: 0; }
.files th:first-child { padding-left: 17px; }
.files td { height: 21px; padding: 0 0 0 6px; color: #6d6d6d; line-height: 18px; }
.files td:first-child { padding-left: 19px; color: #000; }
.files .date { font-size: 13px; }
.files-mark { left: 7px; top: 28px; width: 452px; height: 120px; }
.files-area::before { content: ""; position: absolute; left: 138px; top: 1px; border: 4px solid transparent; border-bottom-color: #6fa7c8; border-top: 0; }
.ex-info { display: flex; gap: 16px; height: 73px; padding: 3px 0 0 23px; border-top: 1px solid #c9d6e8; background: #f0f4fc; color: #1e395b; }
.ex-info svg { width: 60px; height: 66px; }
.ex-info span { margin-top: 3px; font-size: 13px; }

/* detail lines */
.details { display: flex; flex: 1 1 246px; flex-direction: column; border: solid #a0a0a0; border-width: 0 1px; background: #fff; }
.grid2 { width: 1479px; margin-top: 1px; }
.grid2 th { height: 17px; padding: 0; border-right: 1px solid #a0a0a0; border-bottom: 1px solid #808080; background: #f0f0f0; line-height: 16px; }
.grid2 .start { padding-left: 3px; text-align: left; }
.grid2 td { height: 17px; padding: 0 2px 0 1px; border-right: 1px solid #ececec; border-bottom: 1px solid #ececec; line-height: 16px; }
.grid2 .end { text-align: right; }
.grid2 .head { padding: 0; border-color: #a0a0a0; background: #f0f0f0; }
.grid2 .current td:not(.head) { border-top: 1px solid #c46412; border-bottom-color: #c46412; background: #3399ff; color: #fff; line-height: 13px; }
.sort { display: inline-block; margin: 0 -8px 0 20px; border: 4px solid transparent; border-top: 7px solid #b8b8b8; border-bottom: 0; }
.totals { display: flex; gap: 51px; height: 22px; margin-top: auto; padding: 3px 0 0 770px; border-top: 1px solid #a0a0a0; border-bottom: 1px solid #808080; background: #f0f0f0; }
.totals output { width: 84px; height: 16px; padding-right: 3px; border: 1px solid; border-color: #808080 #fff #fff #808080; font: 10px/14px "DejaVu Sans Mono", monospace; text-align: right; }
.totals .second { width: 68px; }

/* action column */
.actions { display: flex; flex-direction: column; align-items: center; width: 149px; margin: 0 1px 0 0; padding: 16px 0 0 6px; border: 1px solid #a0a0a0; box-shadow: inset 1px 1px #fff; }
.actions button { position: relative; display: flex; align-items: center; justify-content: center; gap: 4px; width: 100px; height: 36px; border: 1px solid #000; background: #f0eff0; white-space: nowrap; }
.m43 { margin-top: 43px; } .m4 { margin-top: 4px; } .m15 { margin-top: 15px; } .m7 { margin-top: 7px; } .m10 { margin-top: 10px; } .m51 { margin-top: 51px; } .m48 { margin-top: 48px; }
.actions .focus { gap: 1px; border: 2px solid #606060; }
.focus::after { content: ""; position: absolute; inset: -8px; border: 3px solid #ff3535; }
.wide-gap { width: 10px; } .gap { width: 4px; } .pad { width: 2px; }
.combo.big { width: 97px; height: 22px; font-size: 15px; font-family: "Liberation Serif", "Noto Sans CJK SC", serif; }

/* status bars */
.status { display: flex; flex: none; gap: 3px; height: 20px; padding-top: 2px; line-height: 17px; }
.status.first { gap: 4px; height: 21px; padding: 3px 0 0 2px; }
.status span { height: 17px; padding-left: 1px; overflow: hidden; border: 1px solid; border-color: #a0a0a0 #fff #fff #a0a0a0; white-space: nowrap; line-height: 16px; }
.status .center { padding: 0; text-align: center; }
.rest { flex: 1; }
.s46 { width: 46px; } .s58 { width: 58px; } .s78 { width: 78px; } .s87 { width: 87px; } .s98 { width: 98px; } .s117 { width: 117px; } .s158 { width: 157px; } .s167 { width: 167px; }
.meter { position: absolute; right: 0; bottom: -6px; width: 9px; height: 60px; border: 1px solid #9bb; background: linear-gradient(#e4ece8 20px, #0fb14b 20px, #7ee8a2 60%, #12b24e); }
.taskbar { display: flex; height: 7px; overflow: hidden; border-top: 1px solid #1c3a28; background: linear-gradient(90deg, #4c7456, #2f6a46 40%, #477a58 70%, #2c5a3c); }
.taskbar b { width: 159px; margin-right: 3px; border: 1px solid #16301f; background: linear-gradient(90deg, #9cb7a3, #6f9a7b); }
.orb { width: 28px; height: 28px; margin: 1px 68px 0 13px; border-radius: 14px; background: #a8c8dd; }
.dot { width: 20px; height: 20px; margin: 2px 38px 0 -10px; border-radius: 10px; background: #8ed058; }
.dot.red { margin-right: 22px; background: #e23b30; }
```
